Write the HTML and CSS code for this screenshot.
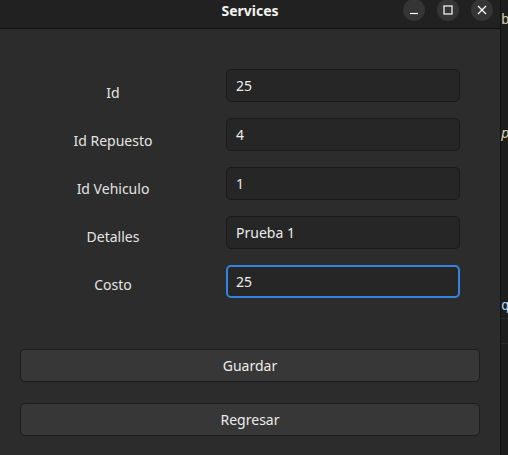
FILE: index.html
```html
<!DOCTYPE html>
<html>
<head>
<meta charset="utf-8">
<link rel="stylesheet" href="styles.css">
</head>
<body>
<div class="window">
  <div class="titlebar">
    <div class="title">Services</div>
    <div class="controls">
      <span class="ctl"><svg width="10" height="10" viewBox="0 0 10 10"><path d="M1 8.5H9" stroke="#fff" stroke-width="1.2"/></svg></span>
      <span class="ctl"><svg width="10" height="10" viewBox="0 0 10 10"><rect x="1" y="1" width="8" height="8" fill="none" stroke="#fff" stroke-width="1.2"/></svg></span>
      <span class="ctl"><svg width="10" height="10" viewBox="0 0 10 10"><path d="M1 1L9 9M9 1L1 9" stroke="#fff" stroke-width="1.2"/></svg></span>
    </div>
  </div>
  <div class="content">
    <div class="form">
      <div class="labels">
        <label class="lbl">Id</label>
        <label class="lbl">Id Repuesto</label>
        <label class="lbl">Id Vehiculo</label>
        <label class="lbl">Detalles</label>
        <label class="lbl">Costo</label>
      </div>
      <div class="fields">
        <div class="field">25</div>
        <div class="field">4</div>
        <div class="field">1</div>
        <div class="field">Prueba 1</div>
        <div class="field focus">25</div>
      </div>
    </div>
    <div class="actions">
      <div class="btn">Guardar</div>
      <div class="btn">Regresar</div>
    </div>
  </div>
</div>
<div class="behind">
  <span class="g g1">b</span>
  <span class="g g2">p</span>
  <span class="g g3">q</span>
  <span class="rule r1"></span>
  <span class="rule r2"></span>
</div>
</body>
</html>
```
FILE: styles.css
```css
html, body { margin: 0; padding: 0; }
body {
  width: 508px; height: 455px; overflow: hidden;
  display: flex; background: #1d1d1d;
  font-family: "Noto Sans", "Open Sans", sans-serif;
  color: #e6e6e6;
}
.window {
  width: 500px; height: 455px; flex: none;
  background: #2c2c2c;
  border-right: 1px solid #121212;
  display: flex; flex-direction: column;
}
.titlebar {
  height: 28px; flex: none;
  background: #212121;
  border-bottom: 1px solid #0f0f0f;
  position: relative;
  display: flex; align-items: center; justify-content: center;
}
.title { font-weight: bold; font-size: 14px; color: #f2f2f2; margin-top: -8px; }
.controls {
  position: absolute; right: 7px; top: -1px;
  display: flex; gap: 12px;
}
.ctl {
  width: 22px; height: 22px; border-radius: 50%;
  background: #353535;
  display: flex; align-items: center; justify-content: center;
}
.content { padding: 40px 20px 0 20px; }
.form {
  display: flex; gap: 20px;
}
.labels {
  width: 186px; padding-top: 14px;
  display: flex; flex-direction: column; gap: 28px;
}
.lbl {
  text-align: center;
  font-size: 14px; line-height: 20px; color: #e4e4e4;
}
.fields {
  width: 234px;
  display: flex; flex-direction: column; gap: 16px;
}
.field {
  box-sizing: border-box; height: 33px;
  background: #262626;
  border: 1px solid #1a1a1a; border-radius: 5px;
  padding: 0 9px;
  font-size: 14px; line-height: 31px; color: #ececec;
}
.field.focus { border: 2px solid #3584e4; padding: 0 8px; line-height: 29px; }
.actions {
  margin-top: 51px;
  display: flex; flex-direction: column; gap: 21px;
}
.btn {
  box-sizing: border-box; height: 33px;
  background: #373737;
  border: 1px solid #1c1c1c; border-radius: 5px;
  text-align: center; font-size: 14px; line-height: 31px; color: #ececec;
}
.behind { flex: 1; position: relative; }
.g { position: absolute; left: 0; font-size: 14px; color: #d8c9a8; font-family: "DejaVu Sans Mono", monospace; }
.g1 { top: 11px; }
.g2 { top: 125px; font-style: italic; }
.g3 { top: 297px; color: #b9d2ee; }
.rule { position: absolute; left: 0; right: 0; height: 1px; background: #2a2a2a; }
.r1 { top: 318px; }
.r2 { top: 343px; }
```
